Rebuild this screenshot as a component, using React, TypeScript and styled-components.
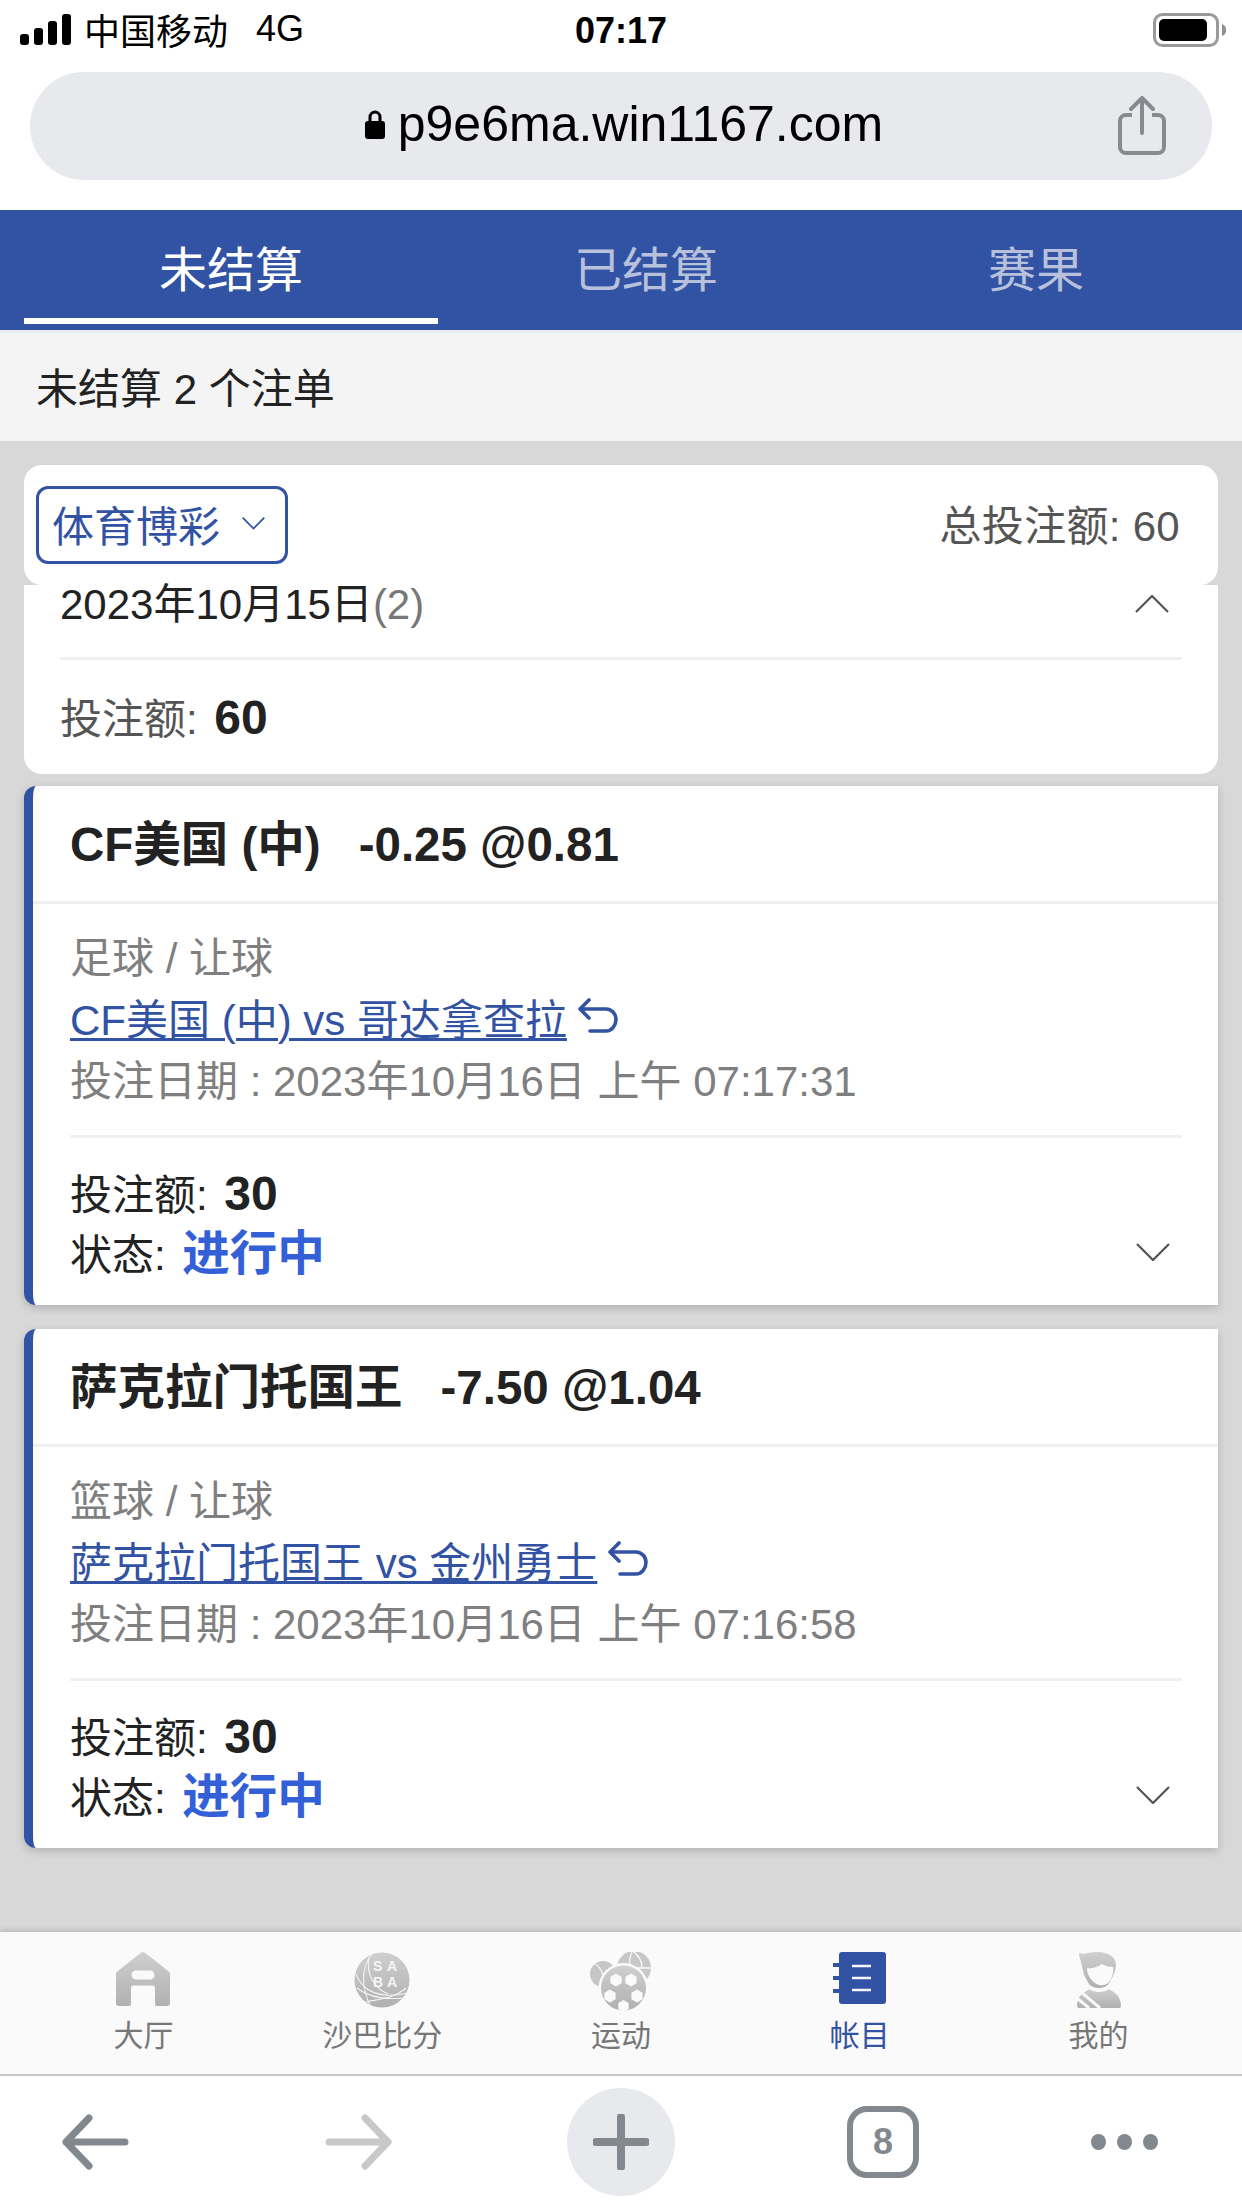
import React from "react";
import styled, { createGlobalStyle } from "styled-components";

const BLUE = "#3252a3";
const FONT = '"Liberation Sans", "Noto Sans CJK SC", sans-serif';

const GlobalStyle = createGlobalStyle`
  html, body {
    margin: 0;
    padding: 0;
    background: #d8d8d8;
  }
  * {
    box-sizing: border-box;
  }
`;

const bets = [
  {
    title: "CF美国 (中)",
    odds: "-0.25 @0.81",
    kind: "足球 / 让球",
    match: "CF美国 (中) vs 哥达拿查拉",
    date: "投注日期 : 2023年10月16日 上午 07:17:31",
  },
  {
    title: "萨克拉门托国王",
    odds: "-7.50 @1.04",
    kind: "篮球 / 让球",
    match: "萨克拉门托国王 vs 金州勇士",
    date: "投注日期 : 2023年10月16日 上午 07:16:58",
  },
];

// white patches of the football, in icon coordinates
const hexagon = (cx: number, cy: number, r: number) =>
  [0, 1, 2, 3, 4, 5]
    .map((i) => {
      const a = (Math.PI / 3) * i + Math.PI / 6;
      return `${(cx + r * Math.cos(a)).toFixed(1)},${(cy + r * Math.sin(a)).toFixed(1)}`;
    })
    .join(" ");

const Chevron = ({ up, size = 34, color = "#555" }: { up?: boolean; size?: number; color?: string }) => (
  <svg width={size} height={size * 0.53} viewBox="0 0 34 18" fill="none">
    <path
      d={up ? "M1 17L17 1l16 16" : "M1 1l16 16L33 1"}
      stroke={color}
      strokeWidth={size < 30 ? 2.6 : 2.2}
    />
  </svg>
);

const Gray = () => (
  <linearGradient id="navGray" x1="0" y1="0" x2="0" y2="1">
    <stop offset="0" stopColor="#cfcfcf" />
    <stop offset="1" stopColor="#b0b0b0" />
  </linearGradient>
);

const HouseIcon = () => (
  <svg width="54" height="54" viewBox="0 0 54 54">
    <defs><Gray /></defs>
    <path
      fill="url(#navGray)"
      fillRule="evenodd"
      d="M25 .8a3.4 3.4 0 0 1 4 0l23.5 18.4a3 3 0 0 1 1.5 2.6V51a3 3 0 0 1-3 3H41a2 2 0 0 1-2-2V36a2.500 2.500 0 0 0-2.500-2.500h-19A2.500 2.500 0 0 0 15 36v16a2 2 0 0 1-2 2H3a3 3 0 0 1-3-3V21.800a3 3 0 0 1 1.500-2.600zM20 18.500a4.500 4.500 0 0 0 0 9h14a4.500 4.500 0 0 0 0-9z"
    />
  </svg>
);

const SabaIcon = () => (
  <svg width="56" height="56" viewBox="0 0 56 56">
    <defs><Gray /></defs>
    <circle cx="28" cy="28" r="27.500" fill="url(#navGray)" />
    <g fill="none" stroke="#f4f4f4" strokeWidth="1.100">
      <path d="M18 2C8 14 6 34 17 55" />
      <path d="M2 22c6 16 22 26 52 19" />
      <path d="M3 36c10 8 26 12 46 10" />
      <path d="M12 50c12-3 28-3 40-14" />
      <path d="M15 6c-3 16 5 30 19 36" />
    </g>
    <g fontFamily={FONT} fontWeight="700" fontSize="14" fill="#f6f6f6">
      <text x="19" y="19">S</text>
      <text x="33" y="19">A</text>
      <text x="19" y="35">B</text>
      <text x="33" y="35">A</text>
    </g>
  </svg>
);

const SportsIcon = () => (
  <svg width="62" height="62" viewBox="0 0 62 62">
    <defs><Gray /></defs>
    <circle cx="13" cy="22" r="13" fill="#c6c6c6" />
    <path d="M5 12c6 3 9 10 8 22" fill="none" stroke="#fafafa" strokeWidth="1.200" />
    <circle cx="44" cy="16" r="17" fill="#c8c8c8" />
    <path d="M27 16h34M42 0c-3 6-3 12 0 16M44 0c6 5 8 10 8 16" fill="none" stroke="#fafafa" strokeWidth="1.300" />
    <circle cx="33.500" cy="36" r="25" fill="#fafafa" />
    <circle cx="33.500" cy="36" r="22.500" fill="url(#navGray)" />
    <g fill="#fafafa">
      <polygon points={hexagon(26, 28, 6.5)} />
      <polygon points={hexagon(41, 28, 6.5)} />
      <polygon points={hexagon(20, 44, 6.5)} />
      <polygon points={hexagon(47, 44, 6.5)} />
      <polygon points={hexagon(33.5, 54, 6)} />
    </g>
  </svg>
);

const BookIcon = () => (
  <svg width="54" height="52" viewBox="0 0 54 52">
    <rect x="6" y="0" width="47" height="52" rx="3" fill={BLUE} />
    <path d="M0 13h7M0 26h7M0 39h7" stroke={BLUE} strokeWidth="4" />
    <path d="M19 14h19M19 26h19M19 38h19" stroke="#f4f6fb" strokeWidth="2.600" />
  </svg>
);

const PersonIcon = () => (
  <svg width="44" height="56" viewBox="0 0 44 56">
    <defs><Gray /></defs>
    <path
      fill="url(#navGray)"
      d="M2 1c5 2 10-1 19-1 10 0 18 5 18 13 0 4-2 8-3 11l-4 7c-3 6-15 7-20 1l-4-7C6 20 5 15 4 10 3 7 2 4 2 1z"
    />
    <path fill="#fafafa" d="M10 16c5 1 11-1 15-4 3 2 7 3 11 3 1 7-2 13-5 16-4 3-9 3-13 0-4-3-8-8-8-15z" />
    <path
      fill="url(#navGray)"
      d="M12 37c5 4 15 4 20 0l6 4c4 3 6 8 6 13a2 2 0 0 1-2 2H2a2 2 0 0 1-2-2c0-6 3-12 8-14z"
    />
    <path d="M4 40l19 16M1 47l11 9" stroke="#fafafa" strokeWidth="3" />
  </svg>
);

const BackIcon = ({ flip, color }: { flip?: boolean; color: string }) => (
  <svg width="67" height="56" viewBox="0 0 67 56" style={flip ? { transform: "scaleX(-1)" } : undefined}>
    <path
      d="M4 28h59M4 28L27 4M4 28l23 24"
      fill="none"
      stroke={color}
      strokeWidth="7"
      strokeLinecap="round"
      strokeLinejoin="round"
    />
  </svg>
);

function App() {
  return (
    <Page>
      <GlobalStyle />
      <StatusBar>
        <Carrier>
          <svg width="52" height="32" viewBox="0 0 52 32">
            <rect x="0" y="20" width="9" height="11" rx="3" fill="#000" />
            <rect x="14" y="14" width="9" height="17" rx="3" fill="#000" />
            <rect x="28" y="7" width="9" height="24" rx="3" fill="#000" />
            <rect x="42" y="0" width="9" height="31" rx="3" fill="#000" />
          </svg>
          <CarrierName>中国移动</CarrierName>
          <NetworkName>4G</NetworkName>
        </Carrier>
        <Clock>07:17</Clock>
        <svg width="73" height="34" viewBox="0 0 73 34" style={{ justifySelf: "end" }}>
          <rect x="1.500" y="1.500" width="63" height="31" rx="8" fill="none" stroke="#9a9a9a" strokeWidth="3" />
          <rect x="6" y="6" width="48" height="22" rx="5" fill="#000" />
          <path d="M69 11c3 1 4 3 4 6s-1 5-4 6z" fill="#8f8f8f" />
        </svg>
      </StatusBar>

      <UrlRow>
        <UrlPill>
          <UrlText>
            <svg width="20" height="30" viewBox="0 0 20 30">
              <path d="M5 13V8a5 5 0 0 1 10 0v5" fill="none" stroke="#000" strokeWidth="3" />
              <rect x="0" y="12" width="20" height="18" rx="3" fill="#000" />
            </svg>
            p9e6ma.win1167.com
          </UrlText>
          <ShareIcon width="48" height="60" viewBox="0 0 48 60">
            <path
              d="M14 19H8a6 6 0 0 0-6 6v26a6 6 0 0 0 6 6h32a6 6 0 0 0 6-6V25a6 6 0 0 0-6-6h-6"
              fill="none"
              stroke="#868b90"
              strokeWidth="4"
            />
            <path
              d="M24 37V3M13 13L24 2l11 11"
              fill="none"
              stroke="#868b90"
              strokeWidth="4"
              strokeLinecap="round"
            />
          </ShareIcon>
        </UrlPill>
      </UrlRow>

      <Tabs>
        <Tab $active>未结算</Tab>
        <Tab>已结算</Tab>
        <Tab>赛果</Tab>
      </Tabs>

      <SubHeader>未结算 2 个注单</SubHeader>

      <Content>
        <FilterCard>
          <Dropdown>
            体育博彩
            <Chevron size={23} color={BLUE} />
          </Dropdown>
          <TotalText>总投注额: 60</TotalText>
        </FilterCard>

        <SummaryCard>
          <DateRow>
            <DateText>
              2023年10月15日<DateCount>(2)</DateCount>
            </DateText>
            <Chevron up />
          </DateRow>
          <SummaryAmount>
            投注额: <BigNumber>60</BigNumber>
          </SummaryAmount>
        </SummaryCard>

        {bets.map((bet) => (
          <BetCard key={bet.title}>
            <BetTitle>
              {bet.title}
              <Odds>{bet.odds}</Odds>
            </BetTitle>
            <BetDetails>
              <GrayLine>{bet.kind}</GrayLine>
              <MatchLine>
                <MatchLink>{bet.match}</MatchLink>
                <svg width="42" height="36" viewBox="0 0 42 36">
                  <path
                    d="M12 2L3 11l9 9M3 11h26c6 0 10 5 10 10.500S35 33 29 33H13"
                    fill="none"
                    stroke={BLUE}
                    strokeWidth="3.600"
                    strokeLinecap="round"
                    strokeLinejoin="round"
                  />
                </svg>
              </MatchLine>
              <GrayLine>{bet.date}</GrayLine>
            </BetDetails>
            <BetFooter>
              <FooterLine>
                投注额: <BigNumber>30</BigNumber>
              </FooterLine>
              <FooterLine>
                状态: <Progress>进行中</Progress>
              </FooterLine>
              <FooterChevron>
                <Chevron />
              </FooterChevron>
            </BetFooter>
          </BetCard>
        ))}
      </Content>

      <BottomNav>
        <NavItem>
          <NavIconBox><HouseIcon /></NavIconBox>
          <NavLabel>大厅</NavLabel>
        </NavItem>
        <NavItem>
          <NavIconBox><SabaIcon /></NavIconBox>
          <NavLabel>沙巴比分</NavLabel>
        </NavItem>
        <NavItem>
          <NavIconBox><SportsIcon /></NavIconBox>
          <NavLabel>运动</NavLabel>
        </NavItem>
        <NavItem>
          <NavIconBox><BookIcon /></NavIconBox>
          <NavLabel $active>帐目</NavLabel>
        </NavItem>
        <NavItem>
          <NavIconBox><PersonIcon /></NavIconBox>
          <NavLabel>我的</NavLabel>
        </NavItem>
      </BottomNav>

      <Toolbar>
        <BackIcon color="#82888d" />
        <BackIcon flip color="#c8c8c8" />
        <PlusCircle>
          <svg width="56" height="56" viewBox="0 0 56 56">
            <path d="M28 3v50M3 28h50" stroke="#82888d" strokeWidth="8" strokeLinecap="round" />
          </svg>
        </PlusCircle>
        <TabCount>8</TabCount>
        <Dots>
          <Dot />
          <Dot />
          <Dot />
        </Dots>
      </Toolbar>
    </Page>
  );
}

export default App;

const Page = styled.div`
  width: 1242px;
  height: 2208px;
  display: flex;
  flex-direction: column;
  overflow: hidden;
  background: #d8d8d8;
  font-family: ${FONT};
`;

const StatusBar = styled.div`
  height: 60px;
  padding: 0 16px 0 20px;
  display: grid;
  grid-template-columns: 1fr auto 1fr;
  align-items: center;
  background: #fff;
  color: #000;
`;

const Carrier = styled.div`
  display: flex;
  align-items: center;
  font-size: 36px;
  svg {
    margin-top: -1px;
  }
`;

const CarrierName = styled.span`
  margin-left: 12px;
  margin-top: -2px;
`;

const NetworkName = styled.span`
  margin-left: 28px;
  margin-top: -2px;
`;

const Clock = styled.div`
  font-size: 36px;
  font-weight: 700;
  margin-left: -4px;
  margin-top: 2px;
`;

const UrlRow = styled.div`
  height: 150px;
  padding: 12px 30px 0;
  background: #fff;
`;

const UrlPill = styled.div`
  position: relative;
  height: 108px;
  border-radius: 54px;
  background: #e8e9ec;
  display: flex;
  align-items: center;
  justify-content: center;
`;

const UrlText = styled.div`
  display: flex;
  align-items: center;
  gap: 13px;
  font-size: 50px;
  color: #000;
  margin: -5px 0 0 6px;
`;

const ShareIcon = styled.svg`
  position: absolute;
  right: 46px;
  top: 24px;
`;

const Tabs = styled.div`
  height: 120px;
  padding: 0 24px;
  display: grid;
  grid-template-columns: 414px 416px 1fr;
  background: ${BLUE};
`;

const Tab = styled.div<{ $active?: boolean }>`
  height: 114px;
  padding-top: 3px;
  display: flex;
  align-items: center;
  justify-content: center;
  font-size: 48px;
  color: ${(p) => (p.$active ? "#fff" : "#b7c1dc")};
  border-bottom: 6px solid ${(p) => (p.$active ? "#fff" : "transparent")};
`;

const SubHeader = styled.div`
  height: 111px;
  padding: 0 0 4px 36px;
  display: flex;
  align-items: center;
  background: #f4f4f4;
  border-top: 3px solid #ececec;
  font-size: 42px;
  color: #222;
`;

const Content = styled.div`
  flex: 1;
  padding: 24px 24px 0;
`;

const FilterCard = styled.div`
  height: 120px;
  padding: 21px 38px 0 12px;
  display: flex;
  justify-content: space-between;
  align-items: flex-start;
  background: #fff;
  border-radius: 18px;
`;

const Dropdown = styled.div`
  width: 252px;
  height: 78px;
  padding: 0 20px 3px 13px;
  display: flex;
  align-items: center;
  justify-content: space-between;
  border: 3px solid ${BLUE};
  border-radius: 12px;
  font-size: 42px;
  color: ${BLUE};
`;

const TotalText = styled.div`
  height: 72px;
  display: flex;
  align-items: center;
  font-size: 42px;
  letter-spacing: 0.3px;
  color: #555;
`;

const SummaryCard = styled.div`
  height: 189px;
  padding: 0 36px;
  background: #fff;
  border-radius: 0 0 18px 18px;
`;

const DateRow = styled.div`
  height: 75px;
  padding: 0 13px 33px 0;
  display: flex;
  align-items: center;
  justify-content: space-between;
  border-bottom: 3px solid #f0f0f0;
`;

const DateText = styled.div`
  font-size: 42px;
  line-height: 40px;
  color: #222;
`;

const DateCount = styled.span`
  color: #777;
`;

const SummaryAmount = styled.div`
  height: 114px;
  line-height: 116px;
  font-size: 42px;
  color: #555;
`;

const BigNumber = styled.b`
  margin-left: 5px;
  font-size: 48px;
  color: #222;
`;

const BetCard = styled.div`
  margin-top: 12px;
  margin-bottom: 24.500px;
  border-left: 9px solid ${BLUE};
  border-radius: 12px 0 0 12px;
  background: #fff;
  box-shadow: 0 3px 8px rgba(0, 0, 0, 0.18);
  & + & {
    margin-top: 0;
  }
`;

const BetTitle = styled.div`
  height: 118px;
  padding-left: 37px;
  line-height: 117px;
  border-bottom: 3px solid #f0f0f0;
  font-size: 47.500px;
  font-weight: 700;
  color: #222;
`;

const Odds = styled.span`
  margin-left: 38px;
`;

const BetDetails = styled.div`
  margin: 0 36px 0 37px;
  padding: 24px 0 22px;
  border-bottom: 3px solid #f0f0f0;
`;

const GrayLine = styled.div`
  height: 61.500px;
  line-height: 61.500px;
  font-size: 42px;
  color: #7f7f7f;
`;

const MatchLine = styled.div`
  height: 61.500px;
  padding-bottom: 8px;
  display: flex;
  align-items: center;
  gap: 10px;
  font-size: 42px;
`;

const MatchLink = styled.span`
  color: ${BLUE};
  text-decoration: underline;
  text-underline-offset: 3px;
  text-decoration-thickness: 3px;
`;

const BetFooter = styled.div`
  position: relative;
  padding: 25px 36px 22px 37px;
`;

const FooterLine = styled.div`
  height: 60px;
  line-height: 61px;
  font-size: 42px;
  color: #222;
`;

const FooterChevron = styled.div`
  position: absolute;
  right: 48px;
  top: 105px;
`;

const Progress = styled.b`
  margin-left: 5px;
  font-size: 47.500px;
  color: #3360d6;
`;

const BottomNav = styled.div`
  height: 144px;
  padding: 0 24px;
  display: grid;
  grid-template-columns: repeat(5, 1fr);
  background: #fafafa;
  border-bottom: 2px solid #c8c8c8;
  box-shadow: 0 -2px 5px rgba(0, 0, 0, 0.14);
  position: relative;
`;

const NavItem = styled.div`
  display: flex;
  flex-direction: column;
  align-items: center;
`;

const NavIconBox = styled.div`
  height: 84px;
  padding-top: 20px;
  display: flex;
  align-items: flex-start;
  justify-content: center;
`;

const NavLabel = styled.div<{ $active?: boolean }>`
  font-size: 30px;
  line-height: 40px;
  color: ${(p) => (p.$active ? BLUE : "#777")};
`;

const Toolbar = styled.div`
  height: 132px;
  display: grid;
  grid-template-columns: 190px 336px 190px 334px 148px;
  align-items: center;
  justify-items: center;
  background: #fff;
`;

const PlusCircle = styled.div`
  width: 108px;
  height: 108px;
  border-radius: 50%;
  background: #e8e9ec;
  display: flex;
  align-items: center;
  justify-content: center;
`;

const TabCount = styled.div`
  width: 72px;
  height: 72px;
  border: 6px solid #82888d;
  border-radius: 20px;
  display: flex;
  align-items: center;
  justify-content: center;
  font-size: 36px;
  font-weight: 700;
  color: #82888d;
`;

const Dots = styled.div`
  display: flex;
  gap: 11px;
`;

const Dot = styled.span`
  width: 15px;
  height: 16px;
  border-radius: 50%;
  background: #82888d;
`;
